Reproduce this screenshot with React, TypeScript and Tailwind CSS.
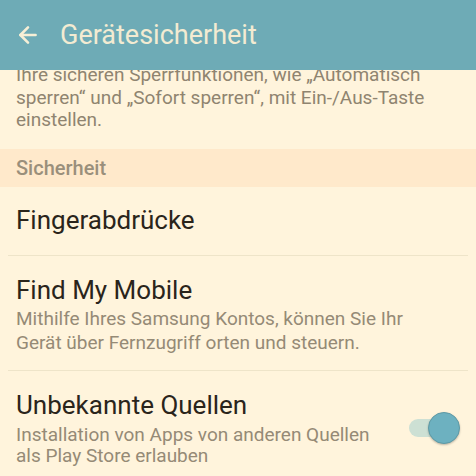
import { ArrowLeft } from "lucide-react";

function Toggle() {
  return (
    <div className="relative h-[32px] w-[52px] shrink-0">
      <div className="absolute left-[1px] top-[7px] h-[18px] w-[40px] rounded-full bg-[#cde0d4]" />
      <div className="absolute right-0 top-0 h-[32px] w-[32px] rounded-full border border-[#5e9aa6] bg-[#6db1c0] shadow-[0_1px_2px_rgba(0,0,0,0.25)]" />
    </div>
  );
}

export default function App() {
  return (
    <div className="flex h-[476px] w-[476px] flex-col overflow-hidden bg-[#fff4dc] font-['Roboto','Liberation_Sans',sans-serif]">
      <header className="relative z-10 flex h-[70px] shrink-0 items-center gap-[19px] bg-[#6eabb6] px-[15px]">
        <ArrowLeft size={26} strokeWidth={2.4} className="text-[#f6efd6]" />
        <h1 className="text-[27px] text-[#f3ebd2]">Gerätesicherheit</h1>
      </header>

      <div className="flex-1 overflow-hidden">
        <p className="-mt-[6px] px-[16px] pb-[17px] text-[19px] leading-[22.5px] text-[#8f8470]">
          Ihre sicheren Sperrfunktionen, wie „Automatisch
          <br />
          sperren“ und „Sofort sperren“, mit Ein-/Aus-Taste
          <br />
          einstellen.
        </p>

        <div className="flex h-[38px] items-center bg-[#ffe9cb] px-[16px] text-[20px] font-medium text-[#9a8f7b]">
          Sicherheit
        </div>

        <div className="flex h-[68px] items-center px-[16px] text-[26px] text-[#2a241b]">Fingerabdrücke</div>
        <div className="mx-[8px] h-px bg-[#eee4c9]" />

        <div className="px-[16px] pb-[15px] pt-[18px]">
          <div className="text-[26px] leading-[32px] text-[#2a241b]">Find My Mobile</div>
          <p className="mt-[1px] text-[19px] leading-[24px] text-[#958a76]">
            Mithilfe Ihres Samsung Kontos, können Sie Ihr
            <br />
            Gerät über Fernzugriff orten und steuern.
          </p>
        </div>
        <div className="mx-[8px] h-px bg-[#eee4c9]" />

        <div className="flex items-center justify-between pl-[16px] pr-[16px] pt-[18px]">
          <div>
            <div className="text-[26px] leading-[32px] text-[#2a241b]">Unbekannte Quellen</div>
            <p className="mt-[3px] text-[19px] leading-[21.5px] text-[#958a76]">
              Installation von Apps von anderen Quellen
              <br />
              als Play Store erlauben
            </p>
          </div>
          <Toggle />
        </div>
      </div>
    </div>
  );
}
